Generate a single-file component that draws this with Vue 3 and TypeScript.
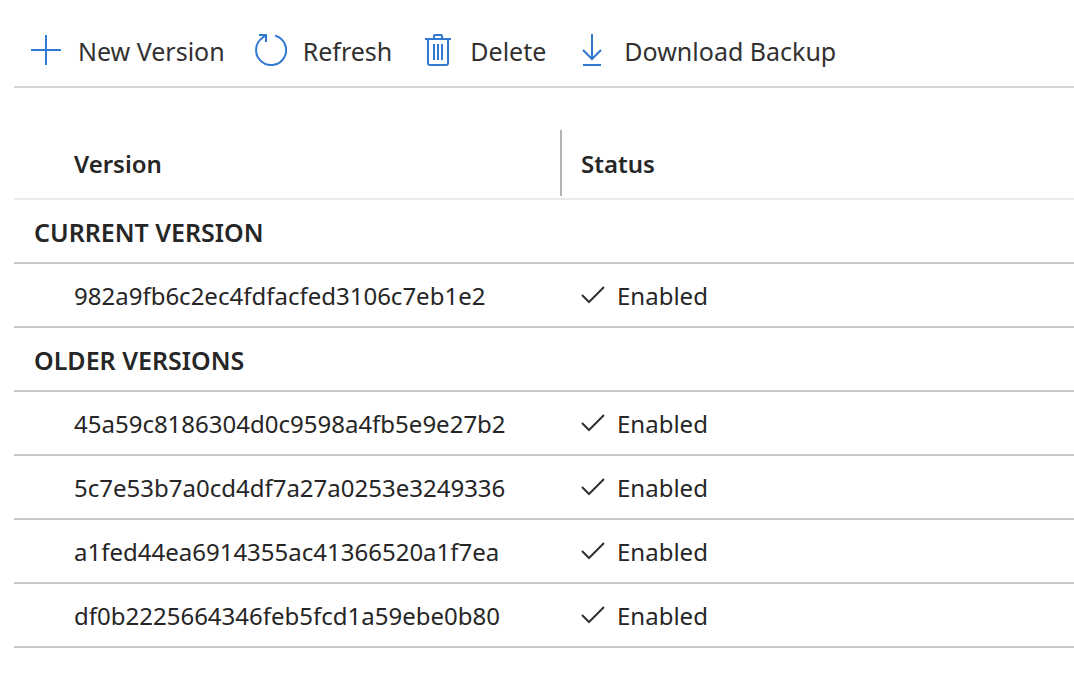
<script setup lang="ts">
interface Version {
  id: string
  status: string
}

interface Group {
  title: string
  versions: Version[]
}

const actions: { icon: string; label: string }[] = [
  { icon: 'add', label: 'New Version' },
  { icon: 'refresh', label: 'Refresh' },
  { icon: 'delete', label: 'Delete' },
  { icon: 'download', label: 'Download Backup' },
]

const groups: Group[] = [
  {
    title: 'CURRENT VERSION',
    versions: [{ id: '982a9fb6c2ec4fdfacfed3106c7eb1e2', status: 'Enabled' }],
  },
  {
    title: 'OLDER VERSIONS',
    versions: [
      { id: '45a59c8186304d0c9598a4fb5e9e27b2', status: 'Enabled' },
      { id: '5c7e53b7a0cd4df7a27a0253e3249336', status: 'Enabled' },
      { id: 'a1fed44ea6914355ac41366520a1f7ea', status: 'Enabled' },
      { id: 'df0b2225664346feb5fcd1a59ebe0b80', status: 'Enabled' },
    ],
  },
]
</script>

<template>
  <main class="page">
    <div class="toolbar" role="toolbar" aria-label="Version actions">
      <button v-for="action in actions" :key="action.icon" type="button" class="action">
        <svg class="icon" viewBox="0 0 32 32" aria-hidden="true">
          <path v-if="action.icon === 'add'" d="M16 1V31M1 16H31" />
          <template v-else-if="action.icon === 'refresh'">
            <path d="M20 1.6A15 15 0 1 1 7.5 3.8L11 1" />
            <path d="M4 1H11V8" />
          </template>
          <template v-else-if="action.icon === 'delete'">
            <path d="M3 5H29M12 5V2Q12 1 13 1H19Q20 1 20 2V5" />
            <path d="M6 5V29Q6 31 8 31H24Q26 31 26 29V5" />
            <path d="M12 10V26M16 10V26M20 10V26" />
          </template>
          <path v-else d="M16 0V25M7 16L16 25L25 16M7 31H25" />
        </svg>
        <span class="label">{{ action.label }}</span>
      </button>
    </div>

    <table class="versions">
      <colgroup>
        <col class="col-version" />
        <col />
      </colgroup>
      <thead>
        <tr>
          <th scope="col"><div class="head head-version">Version</div></th>
          <th scope="col"><div class="head head-status">Status</div></th>
        </tr>
      </thead>
      <tbody v-for="group in groups" :key="group.title">
        <tr>
          <th class="group" colspan="2" scope="rowgroup">{{ group.title }}</th>
        </tr>
        <tr v-for="version in group.versions" :key="version.id">
          <td class="id">{{ version.id }}</td>
          <td>
            <div class="status">
              <svg class="check" viewBox="0 0 24 20" aria-hidden="true">
                <path d="M1 10L8 17L23 2" />
              </svg>
              <span class="label">{{ version.status }}</span>
            </div>
          </td>
        </tr>
      </tbody>
    </table>
  </main>
</template>

<style>
body {
  margin: 0;
  background: #fff;
}
</style>

<style scoped>
.page {
  padding: 14px 0 32px 14px;
  color: #262626;
  font-family: 'Segoe UI', 'Noto Sans', sans-serif;
  font-size: 24px;
  line-height: 32px;
}

.toolbar {
  display: flex;
  align-items: center;
  gap: 30px;
  height: 72px;
  padding-left: 16px;
  border-bottom: 2px solid #d6d6d6;
}

.action {
  display: flex;
  align-items: center;
  gap: 16px;
  padding: 0;
  border: 0;
  background: none;
  color: #323130;
  font: inherit;
  font-size: 25px;
  white-space: nowrap;
  cursor: pointer;
}

.icon {
  width: 32px;
  height: 32px;
  fill: none;
  stroke: #3078d0;
  stroke-width: 2;
}

.label {
  padding-top: 2px;
}

.versions {
  width: 100%;
  margin-top: 42px;
  border-collapse: separate;
  border-spacing: 0;
  table-layout: fixed;
}

.col-version {
  width: 546px;
}

th,
td {
  height: 62px;
  padding: 0;
  border-bottom: 2px solid #c8c8c8;
  text-align: left;
}

th {
  font-weight: 600;
}

thead th {
  height: 68px;
  border-bottom-color: #eaeaea;
  vertical-align: top;
}

.head {
  height: 66px;
  line-height: 68px;
}

.head-version,
.id {
  padding-left: 60px;
}

.id,
.group {
  height: 60px;
  padding-top: 2px;
}

.head-status {
  padding-left: 19px;
  border-left: 2px solid #b3b3b3;
}

.group {
  padding-left: 20px;
  font-size: 25px;
}

.status {
  display: flex;
  align-items: center;
  gap: 12px;
  padding-left: 21px;
}

.check {
  width: 24px;
  height: 20px;
  fill: none;
  stroke: #323130;
  stroke-width: 2;
}
</style>
